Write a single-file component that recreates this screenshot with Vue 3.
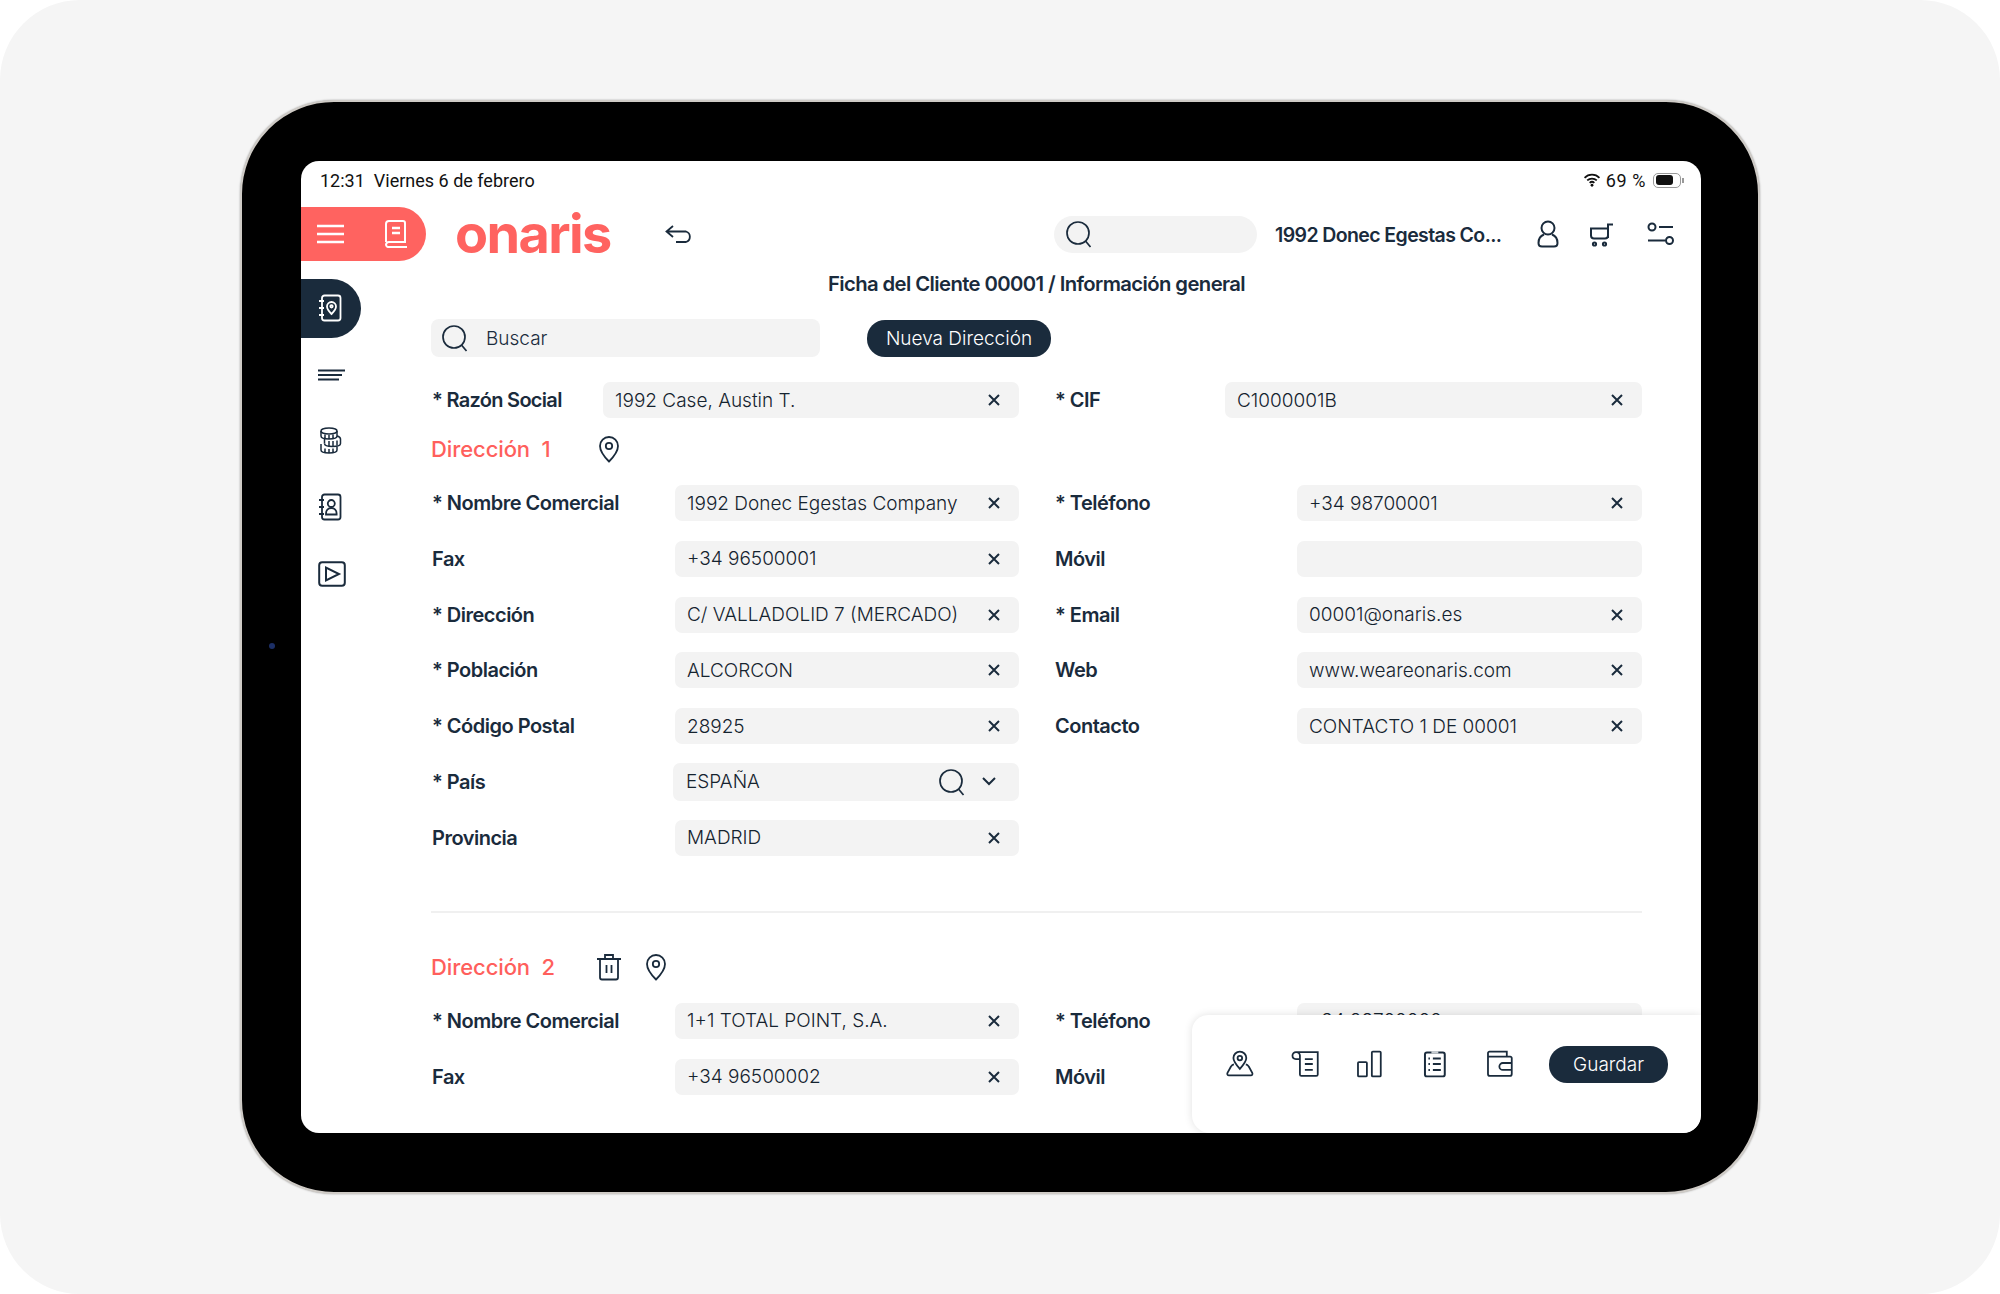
<script setup>
const section1 = [
  { label: '* Nombre Comercial', value: '1992 Donec Egestas Company', rlabel: '* Teléfono', rvalue: '+34 98700001' },
  { label: 'Fax', value: '+34 96500001', rlabel: 'Móvil', rvalue: '' },
  { label: '* Dirección', value: 'C/ VALLADOLID 7 (MERCADO)', rlabel: '* Email', rvalue: '00001@onaris.es' },
  { label: '* Población', value: 'ALCORCON', rlabel: 'Web', rvalue: 'www.weareonaris.com' },
  { label: '* Código Postal', value: '28925', rlabel: 'Contacto', rvalue: 'CONTACTO 1 DE 00001' }
]
const section2 = [
  { label: '* Nombre Comercial', value: '1+1 TOTAL POINT, S.A.', rlabel: '* Teléfono', rvalue: '+34 98700002' },
  { label: 'Fax', value: '+34 96500002', rlabel: 'Móvil', rvalue: '' }
]
</script>

<template>
  <div class="panel">
    <div class="device">
      <span class="camera"></span>
      <div class="screen">
        <div class="status">
          <span class="clock">12:31</span>
          <span class="date">Viernes 6 de febrero</span>
          <span class="grow"></span>
          <svg class="wifi" viewBox="0 0 20 16" width="18" height="14"><path d="M1.5 5.5a12 12 0 0 1 17 0M4.5 8.5a8 8 0 0 1 11 0M7.3 11.2a4 4 0 0 1 5.4 0" fill="none" stroke="#111" stroke-width="2"/><circle cx="10" cy="14" r="1.6" fill="#111"/></svg>
          <span class="pct">69 %</span>
          <span class="battery"><span class="level"></span></span>
          <span class="nub"></span>
        </div>

        <header class="top">
          <div class="menu-pill">
            <svg viewBox="0 0 27 20" width="27" height="20"><path d="M0 2h27M0 10h27M0 18h27" stroke="#fff" stroke-width="2.4"/></svg>
            <svg viewBox="0 0 24 28" width="24" height="28" fill="none" stroke="#fff" stroke-width="2"><path d="M2 22V4a3 3 0 0 1 3-3h14a2 2 0 0 1 2 2v19H5a3 3 0 0 0-3 2.500A2.500 2.500 0 0 0 5 27h18"/><path d="M8 8h8M8 13h8" stroke-width="2.4"/></svg>
          </div>
          <div class="logo">onaris</div>
          <svg class="back" viewBox="0 0 28 18" width="28" height="18" fill="none" stroke="#1a2b3c" stroke-width="1.8"><path d="M8 1 1.5 6.5 8 12M2 6.5h19a5.500 5.500 0 0 1 0 10.500H11"/></svg>
          <span class="grow"></span>
          <div class="top-search">
            <svg viewBox="0 0 28 28" width="28" height="28" fill="none" stroke="#1a2b3c" stroke-width="1.7"><circle cx="13" cy="13" r="11"/><path d="m20.500 21 5 6"/></svg>
          </div>
          <div class="client">1992 Donec Egestas Co...</div>
          <svg class="user" viewBox="0 0 22 28" width="22" height="28" fill="none" stroke="#1a2b3c" stroke-width="2"><circle cx="11" cy="8" r="6.500"/><path d="M7 14.500C3 16 1.500 19.500 1.500 23c0 2.500 1.500 3.500 3.500 3.500h12c2 0 3.500-1 3.500-3.500 0-3.500-1.500-7-5.500-8.500"/></svg>
          <svg class="cart" viewBox="0 0 26 26" width="26" height="26" fill="none" stroke="#1a2b3c" stroke-width="2"><path d="M1 7.500h18v7a3 3 0 0 1-3 3H5a3 3 0 0 1-3-3V7.500M19 17V3.500h5"/><circle cx="5.500" cy="23" r="1.600"/><circle cx="15.500" cy="23" r="1.600"/></svg>
          <svg class="sliders" viewBox="0 0 28 24" width="28" height="24" fill="none" stroke="#1a2b3c" stroke-width="2"><circle cx="5" cy="5" r="3.500"/><path d="M12 5h14M1 18.500h17"/><circle cx="22.500" cy="18.500" r="3.500"/></svg>
        </header>

        <div class="body">
          <nav class="side">
            <div class="side-item">
              <div class="active-pill">
                <svg viewBox="0 0 24 28" width="24" height="30" fill="none" stroke="#fff" stroke-width="1.800"><rect x="4" y="1.500" width="18.500" height="25" rx="2.500"/><path d="M1 7h5M1 14h5M1 21h5"/><path d="M13.500 20c-3-3-4.500-5-4.500-7.500a4.500 4.500 0 0 1 9 0c0 2.500-1.500 4.500-4.500 7.500Z"/><circle cx="13.500" cy="12.300" r="1.200"/></svg>
              </div>
            </div>
            <div class="side-item">
              <svg viewBox="0 0 27 12" width="27" height="12" fill="none" stroke="#1a2b3c" stroke-width="1.800"><path d="M0 1.500h27M0 6h24M0 10.500h21"/></svg>
            </div>
            <div class="side-item">
              <svg class="coins" viewBox="0 0 24 28" width="24" height="28" fill="none" stroke="#1a2b3c" stroke-width="1.500"><ellipse cx="11" cy="4" rx="8" ry="3"/><path d="M3 4v5c0 1.800 3.500 3 8 3s8-1.200 8-3V4M7 7.500v4M11 8v4M15 7.500v4"/><path d="M19 9c2 .5 3.500 1.500 3.500 3v4.500c0 1.800-3.500 3-8 3s-8-1.200-8-3"/><path d="M6.500 11.500v5M11 14v5M15 14v5M19 13.500v5"/><path d="M3 17v6c0 1.800 3.500 3 8 3s8-1.200 8-3v-3.500M7 21.500v4M11 22v4M15 21.500v4"/></svg>
            </div>
            <div class="side-item">
              <svg viewBox="0 0 24 28" width="24" height="28" fill="none" stroke="#1a2b3c" stroke-width="1.800"><rect x="4" y="1.500" width="18.500" height="25" rx="2.500"/><path d="M1 7h5M1 14h5M1 21h5"/><circle cx="13.300" cy="10.500" r="3.500"/><path d="M8 21.500v-1c0-3 2-5.500 5.300-5.500s5.300 2.500 5.300 5.500v1Z"/></svg>
            </div>
            <div class="side-item">
              <svg viewBox="0 0 28 26" width="28" height="26" fill="none" stroke="#1a2b3c" stroke-width="2"><rect x="1.200" y="1.200" width="25.600" height="23.600" rx="3"/><path d="M8 6.500v13L21 13Z"/></svg>
            </div>
          </nav>

          <main class="content">
            <h1 class="title">Ficha del Cliente 00001 / Información general</h1>

            <div class="toolbar">
              <div class="search">
                <svg viewBox="0 0 28 28" width="28" height="28" fill="none" stroke="#1a2b3c" stroke-width="1.700"><circle cx="13" cy="13" r="11"/><path d="m20.500 21 5 6"/></svg>
                <span>Buscar</span>
              </div>
              <button class="dark-btn new">Nueva Dirección</button>
            </div>

            <div class="cols first">
              <div class="field">
                <label class="lab narrow">* Razón Social</label>
                <div class="inp"><span>1992 Case, Austin T.</span><svg class="x" viewBox="0 0 12 12" width="12" height="12"><path d="M1 1l10 10M11 1 1 11" stroke="#1a2b3c" stroke-width="2"/></svg></div>
              </div>
              <div class="field">
                <label class="lab narrow-r">* CIF</label>
                <div class="inp"><span>C1000001B</span><svg class="x" viewBox="0 0 12 12" width="12" height="12"><path d="M1 1l10 10M11 1 1 11" stroke="#1a2b3c" stroke-width="2"/></svg></div>
              </div>
            </div>

            <div class="sec-head">
              <span class="sec-title">Dirección&nbsp; 1</span>
              <svg class="pin-one" viewBox="0 0 22 28" width="22" height="28" fill="none" stroke="#1a2b3c" stroke-width="1.800"><path d="M11 26.500C5 20.500 2 16 2 11a9 9 0 0 1 18 0c0 5-3 9.500-9 15.500Z"/><circle cx="11" cy="11" r="3.200"/></svg>
            </div>

            <div class="cols rows">
              <template v-for="r in section1" :key="r.label">
                <div class="field">
                  <label class="lab">{{ r.label }}</label>
                  <div class="inp"><span>{{ r.value }}</span><svg class="x" viewBox="0 0 12 12" width="12" height="12"><path d="M1 1l10 10M11 1 1 11" stroke="#1a2b3c" stroke-width="2"/></svg></div>
                </div>
                <div class="field">
                  <label class="lab lab-r">{{ r.rlabel }}</label>
                  <div class="inp"><span>{{ r.rvalue }}</span><svg v-if="r.rvalue" class="x" viewBox="0 0 12 12" width="12" height="12"><path d="M1 1l10 10M11 1 1 11" stroke="#1a2b3c" stroke-width="2"/></svg></div>
                </div>
              </template>
              <div class="field">
                <label class="lab">* País</label>
                <div class="inp tall">
                  <span>ESPAÑA</span>
                  <svg class="inner-search" viewBox="0 0 28 28" width="28" height="28" fill="none" stroke="#1a2b3c" stroke-width="1.700"><circle cx="13" cy="13" r="11"/><path d="m20.500 21 5 6"/></svg>
                  <svg class="chev" viewBox="0 0 14 9" width="14" height="9" fill="none" stroke="#1a2b3c" stroke-width="2"><path d="m1 1 6 6 6-6"/></svg>
                </div>
              </div>
              <div></div>
              <div class="field">
                <label class="lab">Provincia</label>
                <div class="inp"><span>MADRID</span><svg class="x" viewBox="0 0 12 12" width="12" height="12"><path d="M1 1l10 10M11 1 1 11" stroke="#1a2b3c" stroke-width="2"/></svg></div>
              </div>
            </div>

            <hr class="divider" />

            <div class="sec-head two">
              <span class="sec-title">Dirección&nbsp; 2</span>
              <svg class="trash" viewBox="0 0 26 28" width="26" height="28" fill="none" stroke="#1a2b3c" stroke-width="1.800"><path d="M1 6h24M9 6V2h8v4M4 6v18.500a2 2 0 0 0 2 2h14a2 2 0 0 0 2-2V6M10.500 12v8M15.500 12v8"/></svg>
              <svg class="pin-two" viewBox="0 0 22 28" width="22" height="28" fill="none" stroke="#1a2b3c" stroke-width="1.800"><path d="M11 26.500C5 20.500 2 16 2 11a9 9 0 0 1 18 0c0 5-3 9.500-9 15.500Z"/><circle cx="11" cy="11" r="3.200"/></svg>
            </div>

            <div class="cols rows">
              <template v-for="r in section2" :key="r.value">
                <div class="field">
                  <label class="lab">{{ r.label }}</label>
                  <div class="inp"><span>{{ r.value }}</span><svg class="x" viewBox="0 0 12 12" width="12" height="12"><path d="M1 1l10 10M11 1 1 11" stroke="#1a2b3c" stroke-width="2"/></svg></div>
                </div>
                <div class="field">
                  <label class="lab lab-r">{{ r.rlabel }}</label>
                  <div class="inp"><span>{{ r.rvalue }}</span><svg v-if="r.rvalue" class="x" viewBox="0 0 12 12" width="12" height="12"><path d="M1 1l10 10M11 1 1 11" stroke="#1a2b3c" stroke-width="2"/></svg></div>
                </div>
              </template>
            </div>
          </main>
        </div>

        <div class="dock">
          <svg viewBox="0 0 28 28" width="28" height="28" fill="none" stroke="#1a2b3c" stroke-width="1.800"><path d="M14 19c-4-4.500-6.500-7.500-6.500-11a6.500 6.500 0 0 1 13 0c0 3.500-2.500 6.500-6.500 11Z"/><circle cx="14" cy="8" r="2.300"/><path d="M8 14.500c-1 .2-2 .8-3 2L1.500 23c-.6 1.300 0 2.500 1.500 2.500h22c1.500 0 2.100-1.200 1.500-2.500L23 16.500c-1-1.200-2-1.800-3-2"/></svg>
          <svg viewBox="0 0 28 28" width="28" height="28" fill="none" stroke="#1a2b3c" stroke-width="1.800"><path d="M9 9v15.500a1.500 1.500 0 0 0 1.500 1.500h15a1.500 1.500 0 0 0 1.500-1.500V2H5a3.500 3.500 0 0 0-3.500 3.500C1.500 8 3 9 5 9h4V5.500A3.500 3.500 0 0 0 5.500 2M14 9h8M14 14h8M14 20h8"/></svg>
          <svg viewBox="0 0 28 28" width="28" height="28" fill="none" stroke="#1a2b3c" stroke-width="1.800"><rect x="2" y="12" width="9" height="14.500" rx="1"/><rect x="16" y="1.500" width="9" height="25" rx="1"/></svg>
          <svg viewBox="0 0 28 28" width="28" height="28" fill="none" stroke="#1a2b3c" stroke-width="2"><rect x="4" y="2.500" width="20" height="24" rx="2"/><path d="M10.500 1h7v2.500h-7Z" fill="#c9ced3" stroke="none"/><path d="M12 8.500h8M12 14h8M12 20h8M7.500 8.500h1.500M7.500 14h1.500M7.500 20h1.500"/></svg>
          <svg viewBox="0 0 28 28" width="28" height="28" fill="none" stroke="#1a2b3c" stroke-width="1.800"><path d="M2 5v19a2 2 0 0 0 2 2h20a2 2 0 0 0 2-2V8a1.500 1.500 0 0 0-1.500-1.500H2V3a1.500 1.500 0 0 1 1.500-1.500H21v5"/><path d="M26 13H17a3 3 0 0 0 0 7h9"/></svg>
          <button class="dark-btn save">Guardar</button>
        </div>
      </div>
    </div>
  </div>
</template>

<style>
html, body { margin: 0; background: #fff; }
</style>

<style scoped>
.panel {
  width: 2000px;
  height: 1294px;
  background: #f5f5f5;
  border-radius: 80px;
  display: flex;
  justify-content: center;
  align-items: flex-start;
  padding-top: 100px;
  box-sizing: border-box;
  font-family: Inter, "Liberation Sans", sans-serif;
  color: #1a2b3c;
}
.device {
  position: relative;
  width: 1520px;
  height: 1094px;
  box-sizing: border-box;
  padding: 59px 59px;
  background: #000;
  border: 2px solid #cfcbc6;
  border-radius: 94px;
  box-shadow: 0 0 2px rgba(0, 0, 0, .35);
}
.camera {
  position: absolute;
  left: 27px;
  top: 541px;
  width: 6px;
  height: 6px;
  border-radius: 50%;
  background: #1c2f66;
}
.screen {
  position: relative;
  width: 1400px;
  height: 972px;
  background: #fff;
  border-radius: 18px;
  overflow: hidden;
}
.grow { flex: 1; }

.status {
  height: 46px;
  display: flex;
  align-items: center;
  padding: 0 17px 8px 19px;
  box-sizing: border-box;
  font-family: Roboto, "Liberation Sans", sans-serif;
  font-size: 18px;
  color: #111;
}
.date { margin-left: 9px; }
.pct { margin-left: 5px; letter-spacing: .6px; }
.battery {
  margin-left: 7px;
  width: 28px;
  height: 15px;
  box-sizing: border-box;
  border: 1px solid #999;
  border-radius: 5px;
  padding: 1.500px;
  display: block;
}
.level {
  display: block;
  width: 17px;
  height: 100%;
  background: #111;
  border-radius: 3px;
}
.nub { width: 2px; height: 5px; background: #999; margin-left: 1px; }

.top { height: 54px; display: flex; align-items: center; }
.menu-pill {
  width: 125px;
  height: 54px;
  box-sizing: border-box;
  background: #ff6360;
  border-radius: 0 27px 27px 0;
  display: flex;
  align-items: center;
  justify-content: space-between;
  padding: 0 18px 0 16px;
}
.logo {
  margin-left: 29px;
  font-size: 54px;
  font-weight: 700;
  letter-spacing: -1.600px;
  line-height: 54px;
  color: #ff6360;
}
.back { margin-left: 54px; }
.top-search {
  width: 203px;
  height: 37px;
  background: #f3f3f3;
  border-radius: 19px;
  display: flex;
  align-items: center;
  padding-left: 11px;
  box-sizing: border-box;
}
.client {
  margin-left: 18px;
  width: 226px;
  font-size: 19.500px;
  font-weight: 600;
  letter-spacing: -0.600px;
  white-space: nowrap;
  padding-top: 2px;
}
.user { margin-left: 36px; }
.cart { margin-left: 30px; }
.sliders { margin-left: 32px; margin-right: 26px; }

.body { display: flex; }
.side { width: 130px; flex: none; padding-top: 14px; }
.side-item {
  height: 66.400px;
  display: flex;
  align-items: center;
  padding-left: 17px;
}
.side-item:first-child { padding-left: 0; }
.active-pill {
  width: 60px;
  height: 59px;
  background: #1a2b3c;
  border-radius: 0 30px 30px 0;
  display: flex;
  align-items: center;
  padding-left: 17px;
  box-sizing: border-box;
}

.content { width: 1211px; flex: none; }
.title {
  margin: 0;
  height: 46px;
  line-height: 46px;
  text-align: center;
  font-size: 20.300px;
  font-weight: 600;
  letter-spacing: -0.600px;
}
.toolbar {
  margin-top: 12px;
  display: flex;
  align-items: center;
  gap: 47px;
}
.search {
  width: 389px;
  height: 38px;
  box-sizing: border-box;
  background: #f3f3f3;
  border-radius: 8px;
  display: flex;
  align-items: center;
  gap: 17px;
  padding-left: 10px;
  font-size: 19px;
  font-weight: 300;
}
.dark-btn {
  border: 0;
  background: #1a2b3c;
  color: #fff;
  font-family: inherit;
  font-size: 19px;
  font-weight: 300;
  border-radius: 18px;
  height: 37px;
  padding: 0;
}
.new { width: 184px; }

.cols {
  display: grid;
  grid-template-columns: 588px 587px;
  column-gap: 36px;
}
.first { margin-top: 25px; }
.rows { row-gap: 19.800px; }
.field { display: flex; align-items: center; height: 36px; }
.lab {
  flex: none;
  width: 244px;
  font-size: 20px;
  font-weight: 600;
  letter-spacing: -0.500px;
  white-space: nowrap;
  padding-left: 1px;
  box-sizing: border-box;
}
.lab-r { width: 242px; padding-left: 0; }
.narrow { width: 172px; letter-spacing: -0.700px; }
.narrow-r { width: 170px; padding-left: 0; }
.inp {
  flex: 1;
  min-width: 0;
  height: 36px;
  box-sizing: border-box;
  background: #f3f3f3;
  border-radius: 7px;
  display: flex;
  align-items: center;
  padding: 0 19px 0 12px;
  font-size: 19px;
  font-weight: 300;
  letter-spacing: 0;
  color: #15232f;
  white-space: nowrap;
}
.inp span { flex: 1; }
.x { flex: none; }
.tall { height: 38px; margin-left: -2px; padding-left: 13px; padding-right: 23px; }
.inner-search { margin-right: 16px; }

.sec-head { display: flex; align-items: center; height: 30px; margin: 16px 0 21px; }
.sec-title {
  font-size: 22px;
  font-weight: 500;
  color: #ff5f5c;
  width: 167px;
  flex: none;
  letter-spacing: -0.100px;
}
.pin-one { margin-left: 0; }
.two { margin: 39px 0 21px; }
.trash { margin-left: -2px; }
.pin-two { margin-left: 23px; }

.divider {
  margin: 55px 0 0;
  border: 0;
  height: 2px;
  background: #f0f0f0;
}

.dock {
  position: absolute;
  right: 0;
  bottom: 0;
  width: 509px;
  height: 118px;
  box-sizing: border-box;
  background: #fff;
  border-radius: 16px 0 18px 18px;
  box-shadow: 0 0 8px rgba(0, 0, 0, .12);
  display: flex;
  align-items: flex-start;
  padding: 35px 33px 0 34px;
  gap: 37.300px;
}
.save { width: 120px; margin-top: -4px; margin-left: -2px; }
</style>
